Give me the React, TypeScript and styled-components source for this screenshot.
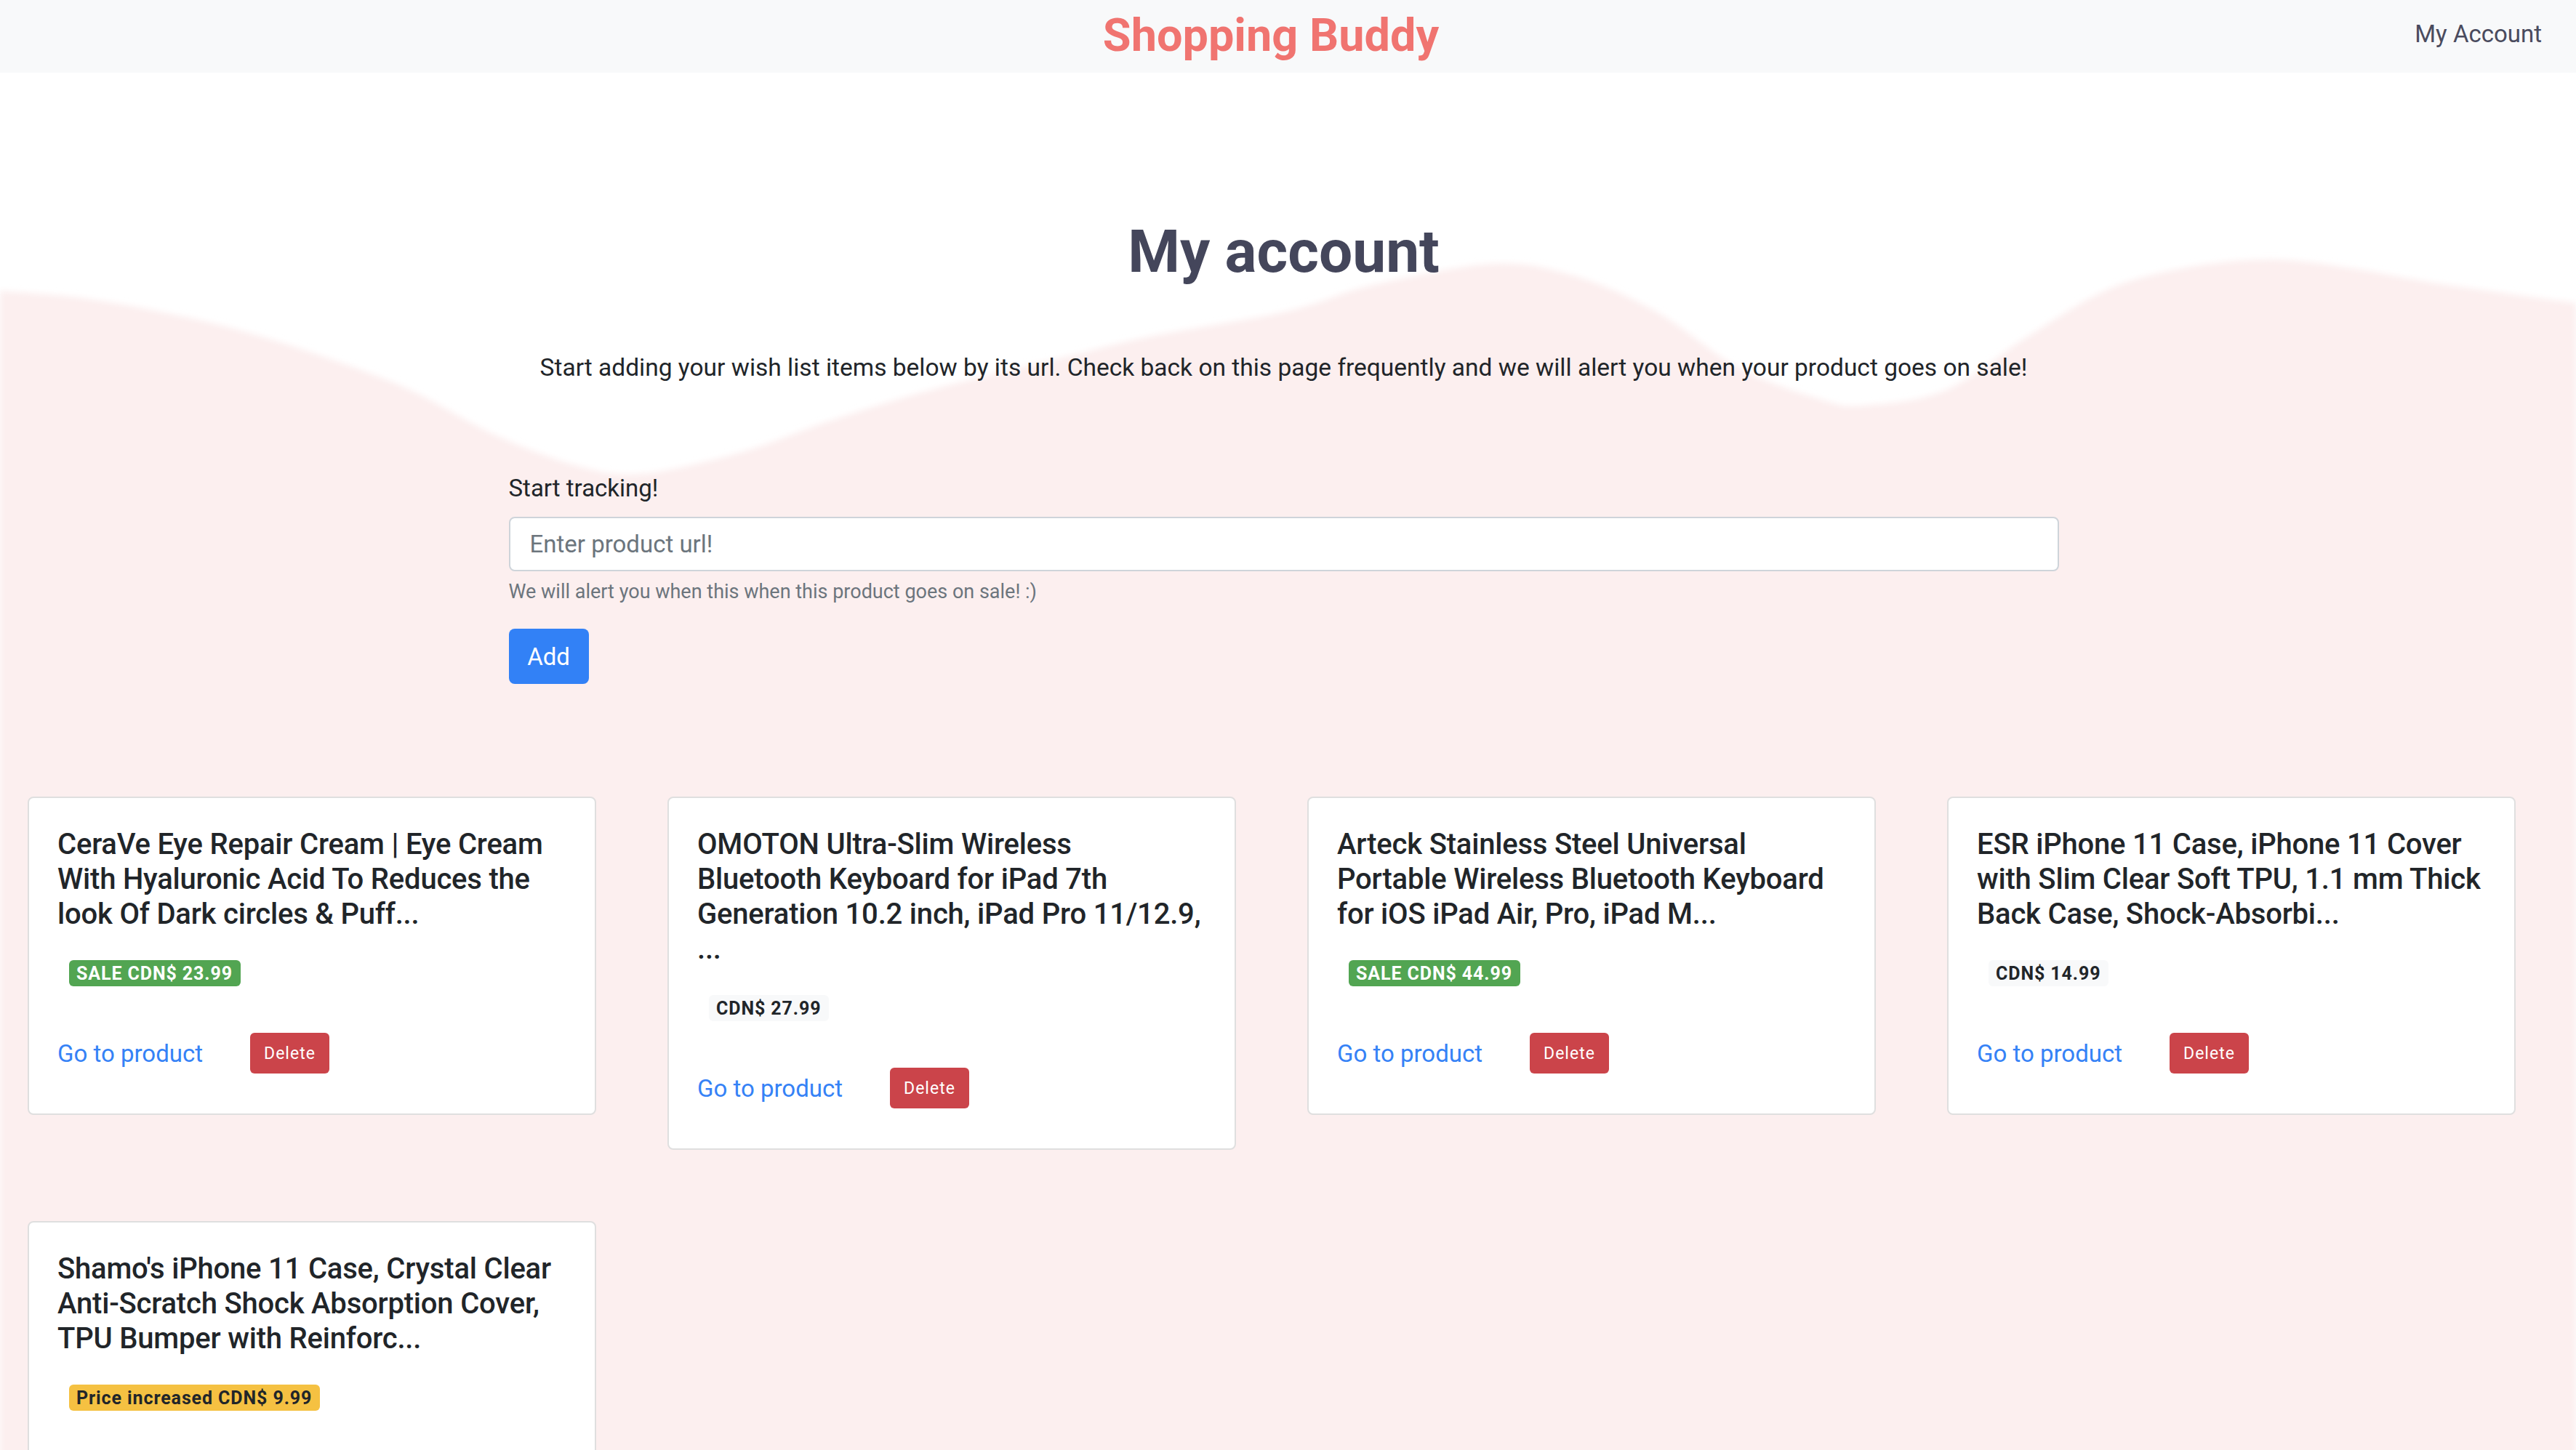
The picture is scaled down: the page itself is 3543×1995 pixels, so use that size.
import React from 'react';
import styled, { createGlobalStyle } from 'styled-components';

const GlobalStyle = createGlobalStyle`
  html, body { margin: 0; padding: 0; background: #ffffff; }
  body { font-family: Roboto, "Liberation Sans", "Noto Sans", sans-serif; color: #212529; }
  *, *::before, *::after { box-sizing: border-box; }
`;

type Pt = [number, number];

const wavePoints: Pt[] = [
  [0, 400], [113, 410], [226, 430], [339, 457], [452, 493], [565, 537], [678, 597],
  [791, 640], [881, 652], [1017, 623], [1130, 583], [1243, 547], [1356, 517],
  [1469, 490], [1582, 463], [1772, 428], [1885, 393], [2054, 363], [2167, 380],
  [2280, 430], [2393, 507], [2506, 550], [2563, 558], [2676, 537], [2789, 463],
  [2902, 397], [3014, 367], [3127, 357], [3240, 370], [3353, 390], [3543, 417],
];

function smoothPath(pts: Pt[], bottom: number): string {
  let d = `M0,${bottom} L${pts[0][0]},${pts[0][1]}`;
  for (let i = 0; i < pts.length - 1; i++) {
    const p0 = pts[i - 1] || pts[i];
    const p1 = pts[i];
    const p2 = pts[i + 1];
    const p3 = pts[i + 2] || p2;
    const c1x = p1[0] + (p2[0] - p0[0]) / 6;
    const c1y = p1[1] + (p2[1] - p0[1]) / 6;
    const c2x = p2[0] - (p3[0] - p1[0]) / 6;
    const c2y = p2[1] - (p3[1] - p1[1]) / 6;
    d += ` C${c1x.toFixed(1)},${c1y.toFixed(1)} ${c2x.toFixed(1)},${c2y.toFixed(1)} ${p2[0]},${p2[1]}`;
  }
  d += ` L3543,${bottom} Z`;
  return d;
}

const WAVE_D = smoothPath(wavePoints, 4000);

const Page = styled.div`
  position: relative;
  min-height: 1995px;
  overflow: hidden;
`;

const WaveLayer = styled.svg`
  position: absolute;
  top: 0;
  left: 0;
  width: 3543px;
  height: 4000px;
  z-index: 0;
  pointer-events: none;
`;

const Header = styled.header`
  position: relative;
  z-index: 1;
  height: 100px;
  background: #f8f9fa;
  display: grid;
  grid-template-columns: 1fr auto 1fr;
  align-items: start;
  padding: 0 47px 0 0;
`;

const Brand = styled.a`
  margin-top: 17px;
  font-size: 63px;
  font-weight: 700;
  color: #f07470;
  text-decoration: none;
  line-height: 1;
`;

const NavLink = styled.a`
  justify-self: end;
  margin-top: 30px;
  font-size: 33px;
  color: #4a4b5e;
  text-decoration: none;
  line-height: 1;
`;

const Main = styled.main`
  position: relative;
  z-index: 1;
`;

const Intro = styled.section`
  width: 2132px;
  margin: 0 auto;
  padding-top: 197px;
  position: relative;
  left: -6px;
  display: flex;
  flex-direction: column;
`;

const PageTitle = styled.h1`
  margin: 0;
  font-size: 82px;
  line-height: 98px;
  font-weight: 700;
  color: #44465b;
  text-align: center;
`;

const Lead = styled.p`
  margin: 86px 0 0;
  font-size: 33.5px;
  line-height: 50px;
  text-align: center;
  white-space: nowrap;
  color: #212529;
`;

const TrackForm = styled.form`
  margin-top: 117px;
  display: flex;
  flex-direction: column;
  align-items: flex-start;
`;

const Label = styled.label`
  font-size: 33px;
  line-height: 48px;
  margin-bottom: 15px;
  color: #212529;
`;

const UrlInput = styled.input`
  width: 100%;
  height: 75px;
  padding: 0 27px;
  font-family: inherit;
  font-size: 33px;
  color: #495057;
  background: #ffffff;
  border: 2px solid #ced4da;
  border-radius: 8px;
  outline: none;
  &::placeholder { color: #6c757d; }
`;

const Hint = styled.small`
  margin-top: 8px;
  font-size: 27px;
  line-height: 40px;
  color: #6c757d;
`;

const AddButton = styled.button`
  margin-top: 31px;
  width: 110px;
  height: 76px;
  border: none;
  border-radius: 8px;
  background: #3281f6;
  color: #ffffff;
  font-family: inherit;
  font-size: 33px;
  cursor: pointer;
`;

const CardGrid = styled.section`
  margin-top: 155px;
  padding: 0 0 80px 38px;
  display: grid;
  grid-template-columns: repeat(4, 782px);
  column-gap: 98px;
  row-gap: 98px;
  align-items: start;
`;

const Card = styled.article`
  background: #ffffff;
  border: 2px solid #dfdfdf;
  border-radius: 8px;
  padding: 40px 39px 55px 39px;
`;

const CardTitle = styled.h5`
  margin: 0 0 39px;
  font-size: 40px;
  line-height: 48px;
  font-weight: 500;
  letter-spacing: -0.2px;
  white-space: nowrap;
  color: #212529;
`;

type Tone = 'sale' | 'plain' | 'up';

const tagColors: Record<Tone, { bg: string; fg: string }> = {
  sale: { bg: '#52a552', fg: '#ffffff' },
  plain: { bg: '#f8f9fa', fg: '#212529' },
  up: { bg: '#f5c142', fg: '#212529' },
};

const PriceTag = styled.span<{ $tone: Tone }>`
  display: inline-flex;
  align-items: center;
  height: 36px;
  margin-left: 16px;
  padding: 0 11px 0 10px;
  border-radius: 6px;
  font-size: 25px;
  font-weight: 700;
  letter-spacing: 0.9px;
  background: ${(p) => tagColors[p.$tone].bg};
  color: ${(p) => tagColors[p.$tone].fg};
`;

const Actions = styled.div`
  margin-top: 64px;
  display: flex;
  align-items: center;
  gap: 65px;
`;

const ProductLink = styled.a`
  font-size: 33px;
  color: #3582f6;
  text-decoration: none;
`;

const DeleteButton = styled.button`
  height: 56px;
  padding: 0 19px;
  border: none;
  border-radius: 6px;
  background: #cb444a;
  color: #ffffff;
  font-family: inherit;
  font-size: 23px;
  letter-spacing: 1px;
  cursor: pointer;
`;

type Product = { lines: string[]; tone: Tone; price: string };

const products: Product[] = [
  {
    lines: ['CeraVe Eye Repair Cream | Eye Cream', 'With Hyaluronic Acid To Reduces the', 'look Of Dark circles & Puff...'],
    tone: 'sale',
    price: 'SALE CDN$ 23.99',
  },
  {
    lines: ['OMOTON Ultra-Slim Wireless', 'Bluetooth Keyboard for iPad 7th', 'Generation 10.2 inch, iPad Pro 11/12.9,', '...'],
    tone: 'plain',
    price: 'CDN$ 27.99',
  },
  {
    lines: ['Arteck Stainless Steel Universal', 'Portable Wireless Bluetooth Keyboard', 'for iOS iPad Air, Pro, iPad M...'],
    tone: 'sale',
    price: 'SALE CDN$ 44.99',
  },
  {
    lines: ['ESR iPhone 11 Case, iPhone 11 Cover', 'with Slim Clear Soft TPU, 1.1 mm Thick', 'Back Case, Shock-Absorbi...'],
    tone: 'plain',
    price: 'CDN$ 14.99',
  },
  {
    lines: ["Shamo's iPhone 11 Case, Crystal Clear", 'Anti-Scratch Shock Absorption Cover,', 'TPU Bumper with Reinforc...'],
    tone: 'up',
    price: 'Price increased CDN$ 9.99',
  },
];

export default function App() {
  return (
    <Page>
      <GlobalStyle />
      <WaveLayer viewBox="0 0 3543 4000" aria-hidden="true">
        <defs>
          <filter id="soft" x="-5%" y="-5%" width="110%" height="110%">
            <feGaussianBlur stdDeviation="4" />
          </filter>
        </defs>
        <path d={WAVE_D} fill="#fcefef" filter="url(#soft)" />
      </WaveLayer>
      <Header>
        <span />
        <Brand href="#">Shopping Buddy</Brand>
        <NavLink href="#">My Account</NavLink>
      </Header>
      <Main>
        <Intro>
          <PageTitle>My account</PageTitle>
          <Lead>
            Start adding your wish list items below by its url. Check back on this page frequently and we will alert
            you when your product goes on sale!
          </Lead>
          <TrackForm onSubmit={(e) => e.preventDefault()}>
            <Label htmlFor="url">Start tracking!</Label>
            <UrlInput id="url" type="text" placeholder="Enter product url!" />
            <Hint>We will alert you when this when this product goes on sale! :)</Hint>
            <AddButton type="submit">Add</AddButton>
          </TrackForm>
        </Intro>
        <CardGrid>
          {products.map((p) => (
            <Card key={p.lines[0]}>
              <CardTitle>
                {p.lines.map((line, i) => (
                  <React.Fragment key={i}>
                    {i > 0 && <br />}
                    {line}
                  </React.Fragment>
                ))}
              </CardTitle>
              <PriceTag $tone={p.tone}>{p.price}</PriceTag>
              <Actions>
                <ProductLink href="#">Go to product</ProductLink>
                <DeleteButton type="button">Delete</DeleteButton>
              </Actions>
            </Card>
          ))}
        </CardGrid>
      </Main>
    </Page>
  );
}
